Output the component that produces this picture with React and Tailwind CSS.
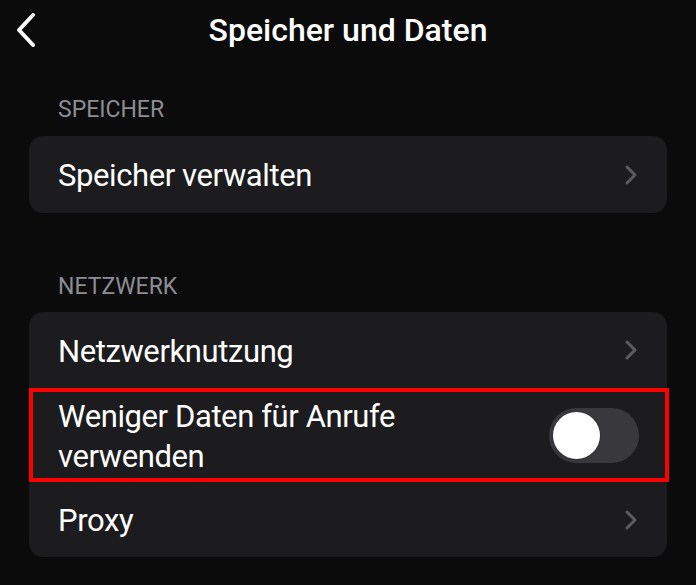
import React from 'react';

const Chevron = () => (
  <svg width="14" height="22" viewBox="0 0 14 22" fill="none" className="shrink-0">
    <path d="M3 3l8 8-8 8" stroke="#5b5b60" strokeWidth="3" strokeLinecap="round" strokeLinejoin="round" />
  </svg>
);

const Row = ({ label, children, className = '' }) => (
  <div className={`flex items-center justify-between pl-[29px] pr-[29px] ${className}`}>
    <span className="pt-[3px] text-[31px] leading-[40px] tracking-[-0.4px] text-white">{label}</span>
    {children}
  </div>
);

const Toggle = () => (
  <div className="w-[90px] h-[55px] rounded-full bg-[#39393d] p-[4px] flex items-center">
    <div className="w-[47px] h-[47px] rounded-full bg-white shadow" />
  </div>
);

export default function App() {
  return (
    <div
      className="w-[696px] h-[585px] bg-[#0b0b0b] overflow-hidden"
      style={{ fontFamily: 'Roboto, "Noto Sans", sans-serif' }}
    >
      <div className="relative h-[60px] flex items-center justify-center">
        <svg width="24" height="38" viewBox="0 0 24 38" fill="none" className="absolute left-[14px] top-[11px]">
          <path d="M19 4L5 19l14 15" stroke="white" strokeWidth="4" strokeLinecap="round" strokeLinejoin="round" />
        </svg>
        <h1 className="text-[32px] font-medium text-white">Speicher und Daten</h1>
      </div>

      <div className="px-[29px]">
        <div className="pt-[37px] pb-[13px] pl-[29px] text-[23px] leading-[26px] text-[#8d8d93]">SPEICHER</div>
        <div className="rounded-[14px] bg-[#1c1c1e]">
          <Row label="Speicher verwalten" className="h-[77px]">
            <Chevron />
          </Row>
        </div>

        <div className="pt-[61px] pb-[12px] pl-[29px] text-[23px] leading-[26px] text-[#8d8d93]">NETZWERK</div>
        <div className="rounded-[14px] bg-[#1c1c1e]">
          <Row label="Netzwerknutzung" className="h-[76px]">
            <Chevron />
          </Row>
          <div className="h-[94px] flex items-center justify-between pl-[25px] pr-[26px] mr-[-2px] border-[4px] border-[#ff0000]">
            <span className="pt-[3px] text-[31px] leading-[40px] tracking-[-0.4px] text-white">
              Weniger Daten für Anrufe
              <br />
              verwenden
            </span>
            <Toggle />
          </div>
          <Row label="Proxy" className="h-[75px]">
            <Chevron />
          </Row>
        </div>
      </div>
    </div>
  );
}
